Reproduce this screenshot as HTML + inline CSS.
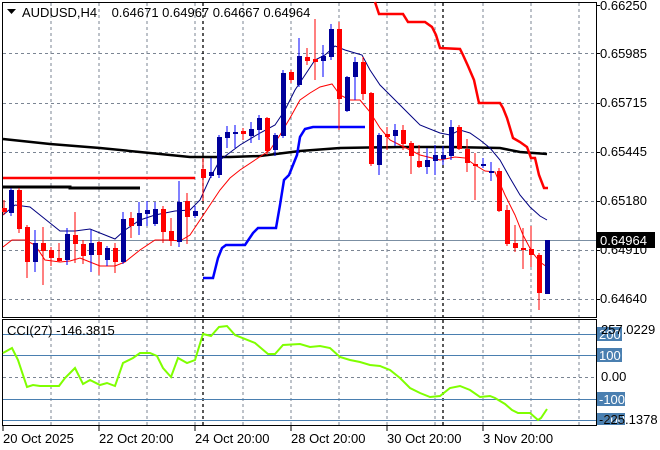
<!DOCTYPE html>
<html><head><meta charset="utf-8"><style>
html,body{margin:0;padding:0;background:#fff;}
svg{display:block;font-family:"Liberation Sans",sans-serif;}
</style></head><body>
<svg width="660" height="450" viewBox="0 0 660 450" xmlns="http://www.w3.org/2000/svg">
<rect width="660" height="450" fill="#fff"/>
<g stroke="#7b8593" stroke-width="1" stroke-dasharray="3,3" fill="none">
<path d="M51 3V318M99 3V318M147 3V318M195 3V318M243 3V318M291 3V318M339 3V318M387 3V318M435 3V318M483 3V318M531 3V318M579 3V318"/>
<path d="M3 53.5H596M3 103.5H596M3 152.5H596M3 201.5H596M3 250.5H596M3 299.5H596"/>
<path d="M51 320V426M99 320V426M147 320V426M195 320V426M243 320V426M291 320V426M339 320V426M387 320V426M435 320V426M483 320V426M531 320V426M579 320V426"/>
<path d="M3 377.5H596"/>
</g>
<g stroke="#000" stroke-width="1.3" stroke-dasharray="3,3"><path d="M203 3V318M203 320V426M443 3V318M443 320V426"/></g>
<path d="M3 240.5H596" stroke="#7b8fa3" stroke-width="1"/>
<g stroke="#4a7fb0" stroke-width="1"><path d="M3 334.5H596M3 355.5H596M3 399.5H596M3 420.5H596"/></g>
<g fill="none" stroke="#000" stroke-width="1">
<rect x="2.5" y="2.5" width="594" height="315"/>
<rect x="2.5" y="319.5" width="594" height="106"/>
</g>
<path d="M3 178H195" stroke="#f00" stroke-width="2.5"/>
<path d="M3 187H70V188H140" stroke="#000" stroke-width="3" fill="none"/>
<polyline fill="none" stroke="#000" stroke-width="2.5" points="3,139 50,144 100,148 150,153 190,157 230,157 260,156 300,151 340,148 400,147 450,147 500,148 520,152 547,154"/>
<polyline fill="none" stroke="#0000ff" stroke-width="2.5" points="203,278 213,278 218,258 222,248 226,245 245,245 253,233 258,228 276,228 280,205 284,180 289,175 297,155 300,137 305,129 313,127 365,127"/>
<polyline fill="none" stroke="#f00" stroke-width="2.5" points="375,2 379,14 403,14 408,22 425,22 432,27 436,35 440,48 460,49 463,55 468,66 474,80 479,103 500,103 503,108 507,118 513,138 520,142 527,147 531,158 535,158 539,175 544,188 548,188"/>
<polyline fill="none" stroke="#f00" stroke-width="1" points="3,247 12,240 25,240 35,245 45,260 60,262 70,261 80,258 90,262 100,266 115,266 125,262 140,250 155,240 170,240 180,241 190,235 200,220 210,205 220,190 230,178 240,170 255,160 270,150 280,135 290,118 300,100 310,93 320,87 332,84 340,95 350,100 360,100 370,112 380,128 390,140 400,145 420,155 440,160 455,157 465,158 475,165 485,171 495,172 505,195 515,215 523,235 532,252 540,262 547,267"/>
<polyline fill="none" stroke="#000080" stroke-width="1" points="3,215 15,205 30,207 45,219 60,231 75,231 90,229 105,235 115,239 125,230 140,220 155,215 175,211 190,210 200,200 210,178 220,160 240,145 260,133 275,125 285,110 295,90 305,75 315,60 325,55 335,46 345,50 355,53 362,55 370,70 380,85 390,95 400,105 410,115 420,125 440,133 450,135 460,130 470,133 480,140 490,148 500,160 510,178 520,195 530,207 540,216 547,220"/>
<g stroke-width="1">
<path stroke="#f00" d="M4 200V215"/><rect x="2" y="208" width="5" height="4" fill="#f00"/>
<path stroke="#0000ff" d="M11 188V216"/><rect x="9" y="190" width="5" height="23" fill="#00009a"/>
<path stroke="#f00" d="M19 188V233"/><rect x="17" y="190" width="5" height="39" fill="#f00"/>
<path stroke="#f00" d="M27 225V278"/><rect x="25" y="227" width="5" height="35" fill="#f00"/>
<path stroke="#0000ff" d="M35 230V272"/><rect x="33" y="243" width="5" height="19" fill="#00009a"/>
<path stroke="#f00" d="M43 227V285"/><rect x="41" y="243" width="5" height="8" fill="#f00"/>
<path stroke="#f00" d="M51 247V266"/><rect x="49" y="250" width="5" height="8" fill="#f00"/>
<path stroke="#f00" d="M59 243V262"/><rect x="57" y="258" width="5" height="3" fill="#f00"/>
<path stroke="#0000ff" d="M67 228V265"/><rect x="65" y="234" width="5" height="26" fill="#00009a"/>
<path stroke="#f00" d="M75 212V263"/><rect x="73" y="235" width="5" height="9" fill="#f00"/>
<path stroke="#f00" d="M83 240V264"/><rect x="81" y="244" width="5" height="12" fill="#f00"/>
<path stroke="#0000ff" d="M91 230V272"/><rect x="89" y="243" width="5" height="12" fill="#00009a"/>
<path stroke="#f00" d="M99 241V275"/><rect x="97" y="242" width="5" height="13" fill="#f00"/>
<path stroke="#0000ff" d="M107 246V266"/><rect x="105" y="248" width="5" height="12" fill="#00009a"/>
<path stroke="#f00" d="M115 243V273"/><rect x="113" y="248" width="5" height="14" fill="#f00"/>
<path stroke="#0000ff" d="M123 212V264"/><rect x="121" y="219" width="5" height="43" fill="#00009a"/>
<path stroke="#f00" d="M131 212V238"/><rect x="129" y="218" width="5" height="8" fill="#f00"/>
<path stroke="#0000ff" d="M139 202V235"/><rect x="137" y="213" width="5" height="13" fill="#00009a"/>
<path stroke="#0000ff" d="M147 201V226"/><rect x="145" y="210" width="5" height="4" fill="#00009a"/>
<path stroke="#0000ff" d="M155 202V226"/><rect x="153" y="209" width="5" height="15" fill="#00009a"/>
<path stroke="#f00" d="M163 206V243"/><rect x="161" y="209" width="5" height="23" fill="#f00"/>
<path stroke="#f00" d="M171 218V246"/><rect x="169" y="231" width="5" height="10" fill="#f00"/>
<path stroke="#0000ff" d="M179 181V247"/><rect x="177" y="202" width="5" height="40" fill="#00009a"/>
<path stroke="#f00" d="M187 193V244"/><rect x="185" y="201" width="5" height="16" fill="#f00"/>
<path stroke="#0000ff" d="M195 206V218"/><rect x="193" y="211" width="5" height="5" fill="#00009a"/>
<path stroke="#f00" d="M203 158V201"/><rect x="201" y="169" width="5" height="9" fill="#f00"/>
<path stroke="#0000ff" d="M211 158V178"/><rect x="209" y="172" width="5" height="4" fill="#00009a"/>
<path stroke="#0000ff" d="M219 135V178"/><rect x="217" y="137" width="5" height="38" fill="#00009a"/>
<path stroke="#0000ff" d="M227 126V148"/><rect x="225" y="132" width="5" height="6" fill="#00009a"/>
<path stroke="#0000ff" d="M235 125V148"/><rect x="233" y="132" width="5" height="2" fill="#00009a"/>
<path stroke="#f00" d="M243 128V140"/><rect x="241" y="131" width="5" height="3" fill="#f00"/>
<path stroke="#0000ff" d="M251 122V143"/><rect x="249" y="129" width="5" height="7" fill="#00009a"/>
<path stroke="#0000ff" d="M259 115V140"/><rect x="257" y="118" width="5" height="12" fill="#00009a"/>
<path stroke="#f00" d="M267 117V155"/><rect x="265" y="118" width="5" height="33" fill="#f00"/>
<path stroke="#0000ff" d="M275 133V156"/><rect x="273" y="135" width="5" height="15" fill="#00009a"/>
<path stroke="#0000ff" d="M283 70V138"/><rect x="281" y="73" width="5" height="63" fill="#00009a"/>
<path stroke="#f00" d="M291 70V83"/><rect x="289" y="72" width="5" height="8" fill="#f00"/>
<path stroke="#0000ff" d="M299 38V87"/><rect x="297" y="56" width="5" height="29" fill="#00009a"/>
<path stroke="#f00" d="M307 48V65"/><rect x="305" y="57" width="5" height="4" fill="#f00"/>
<path stroke="#f00" d="M315 19V80"/><rect x="313" y="59" width="5" height="3" fill="#f00"/>
<path stroke="#0000ff" d="M323 45V77"/><rect x="321" y="56" width="5" height="5" fill="#00009a"/>
<path stroke="#0000ff" d="M331 24V60"/><rect x="329" y="29" width="5" height="28" fill="#00009a"/>
<path stroke="#f00" d="M339 22V130"/><rect x="337" y="29" width="5" height="70" fill="#f00"/>
<path stroke="#0000ff" d="M347 76V112"/><rect x="345" y="77" width="5" height="34" fill="#00009a"/>
<path stroke="#0000ff" d="M355 57V100"/><rect x="353" y="62" width="5" height="15" fill="#00009a"/>
<path stroke="#f00" d="M363 57V100"/><rect x="361" y="62" width="5" height="32" fill="#f00"/>
<path stroke="#f00" d="M371 92V166"/><rect x="369" y="93" width="5" height="71" fill="#f00"/>
<path stroke="#0000ff" d="M379 133V175"/><rect x="377" y="135" width="5" height="30" fill="#00009a"/>
<path stroke="#f00" d="M387 127V150"/><rect x="385" y="134" width="5" height="3" fill="#f00"/>
<path stroke="#0000ff" d="M395 124V146"/><rect x="393" y="130" width="5" height="6" fill="#00009a"/>
<path stroke="#f00" d="M403 125V150"/><rect x="401" y="130" width="5" height="14" fill="#f00"/>
<path stroke="#f00" d="M411 141V174"/><rect x="409" y="143" width="5" height="13" fill="#f00"/>
<path stroke="#f00" d="M419 145V168"/><rect x="417" y="161" width="5" height="6" fill="#f00"/>
<path stroke="#0000ff" d="M427 148V174"/><rect x="425" y="160" width="5" height="7" fill="#00009a"/>
<path stroke="#0000ff" d="M435 145V175"/><rect x="433" y="155" width="5" height="6" fill="#00009a"/>
<path stroke="#0000ff" d="M443 146V165"/><rect x="441" y="155" width="5" height="4" fill="#00009a"/>
<path stroke="#0000ff" d="M451 120V160"/><rect x="449" y="127" width="5" height="29" fill="#00009a"/>
<path stroke="#f00" d="M459 125V150"/><rect x="457" y="127" width="5" height="22" fill="#f00"/>
<path stroke="#f00" d="M467 139V172"/><rect x="465" y="149" width="5" height="14" fill="#f00"/>
<path stroke="#f00" d="M475 153V200"/><rect x="473" y="164" width="5" height="2" fill="#f00"/>
<path stroke="#0000ff" d="M483 158V168"/><rect x="481" y="164" width="5" height="2" fill="#00009a"/>
<path stroke="#0000ff" d="M491 162V181"/><rect x="489" y="171" width="5" height="2" fill="#00009a"/>
<path stroke="#f00" d="M499 168V212"/><rect x="497" y="171" width="5" height="40" fill="#f00"/>
<path stroke="#f00" d="M507 205V246"/><rect x="505" y="210" width="5" height="34" fill="#f00"/>
<path stroke="#f00" d="M515 225V252"/><rect x="513" y="243" width="5" height="5" fill="#f00"/>
<path stroke="#f00" d="M523 228V269"/><rect x="521" y="248" width="5" height="2" fill="#f00"/>
<path stroke="#f00" d="M531 226V267"/><rect x="529" y="249" width="5" height="6" fill="#f00"/>
<path stroke="#f00" d="M539 253V310"/><rect x="537" y="255" width="5" height="38" fill="#f00"/>
<rect x="545" y="240" width="5" height="54" fill="#00009a"/>
</g>
<polyline fill="none" stroke="#7fff00" stroke-width="2" points="3,353 12,348 18,360 27,387 33,385 40,386 59,386 65,378 75,368 83,384 90,380 100,385 107,383 115,386 123,363 133,358 140,353 150,353 157,356 163,368 171,377 178,358 187,363 195,360 203,334 211,336 219,327 227,326 235,335 255,343 268,354 275,354 283,345 300,344 310,347 320,346 330,348 340,357 350,360 360,362 370,365 380,366 390,370 400,378 410,388 420,393 430,397 440,396 450,388 460,386 470,390 480,397 490,396 495,398 505,404 512,410 518,413 530,413 538,420 541,418 547,409"/>
<path d="M7 9H16L11.5 14Z" fill="#000"/>
<text x="22" y="17" font-size="13" fill="#000" xml:space="preserve" style="white-space:pre">AUDUSD,H4    0.64671 0.64967 0.64667 0.64964</text>
<text x="7" y="335" font-size="13" fill="#000">CCI(27) -146.3815</text>
<g font-size="13" fill="#000">
<text x="600" y="10">0.66250</text>
<text x="600" y="58">0.65985</text>
<text x="600" y="107">0.65715</text>
<text x="600" y="156">0.65445</text>
<text x="600" y="205">0.65180</text>
<text x="600" y="254">0.64910</text>
<text x="600" y="303">0.64640</text>
</g>
<g stroke="#000"><path d="M596 5.5H600M596 53.5H600M596 103.5H600M596 152.5H600M596 201.5H600M596 250.5H600M596 299.5H600"/></g>
<rect x="597" y="232" width="58" height="16" fill="#000"/>
<text x="600" y="245" font-size="13" fill="#fff">0.64964</text>
<g fill="#4a7fb0">
<rect x="597" y="327" width="25" height="14"/>
<rect x="597" y="348" width="25" height="14"/>
<rect x="597" y="392" width="28" height="14"/>
<rect x="597" y="413" width="28" height="12"/>
</g>
<g font-size="13" fill="#fff">
<text x="599" y="339">200</text>
<text x="599" y="360">100</text>
<text x="599" y="404">-100</text>
<text x="599" y="424">-200</text>
</g>
<g font-size="13" fill="#000">
<text x="601" y="334">257.0229</text>
<text x="601" y="381">0.00</text>
<text x="599" y="424">-225.1378</text>
</g>
<g stroke="#000"><path d="M3 426V431M99 426V431M195 426V431M291 426V431M387 426V431M483 426V431"/></g>
<g font-size="13" fill="#000">
<text x="3" y="443">20 Oct 2025</text>
<text x="99" y="443">22 Oct 20:00</text>
<text x="195" y="443">24 Oct 20:00</text>
<text x="291" y="443">28 Oct 20:00</text>
<text x="387" y="443">30 Oct 20:00</text>
<text x="483" y="443">3 Nov 20:00</text>
</g>
</svg>
</body></html>
